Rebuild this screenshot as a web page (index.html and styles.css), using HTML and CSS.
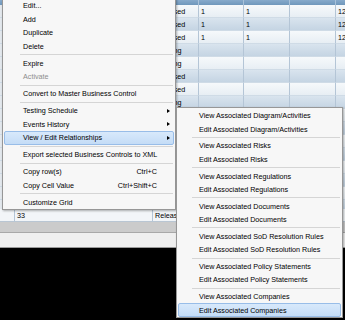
FILE: index.html
```html
<!DOCTYPE html>
<html lang="en">
<head>
  <meta charset="UTF-8" />
  <title>Business Controls</title>
  <link rel="stylesheet" href="styles.css">
</head>
<body>
  <div class="screen">
    <div class="grid">
      <div class="row head">
        <div class="cell c0"></div><div class="cell c1"></div><div class="cell c2"></div>
        <div class="cell c3"></div><div class="cell c4"></div><div class="cell c5"></div><div class="cell c6"></div>
      </div>
      <div class="rows">
        <div class="row"><div class="cell c0"></div><div class="cell c1"></div><div class="cell c2">Released</div><div class="cell c3">1</div><div class="cell c4">1</div><div class="cell c5"></div><div class="cell c6">12</div></div>
        <div class="row"><div class="cell c0"></div><div class="cell c1"></div><div class="cell c2">Released</div><div class="cell c3">1</div><div class="cell c4">1</div><div class="cell c5"></div><div class="cell c6">12</div></div>
        <div class="row"><div class="cell c0"></div><div class="cell c1"></div><div class="cell c2">Released</div><div class="cell c3">1</div><div class="cell c4">1</div><div class="cell c5"></div><div class="cell c6">12</div></div>
        <div class="row"><div class="cell c0"></div><div class="cell c1"></div><div class="cell c2">Pending</div><div class="cell c3"></div><div class="cell c4"></div><div class="cell c5"></div><div class="cell c6"></div></div>
        <div class="row"><div class="cell c0"></div><div class="cell c1"></div><div class="cell c2">Pending</div><div class="cell c3"></div><div class="cell c4"></div><div class="cell c5"></div><div class="cell c6"></div></div>
        <div class="row"><div class="cell c0"></div><div class="cell c1"></div><div class="cell c2">Released</div><div class="cell c3"></div><div class="cell c4"></div><div class="cell c5"></div><div class="cell c6"></div></div>
        <div class="row"><div class="cell c0"></div><div class="cell c1"></div><div class="cell c2">Released</div><div class="cell c3"></div><div class="cell c4"></div><div class="cell c5"></div><div class="cell c6"></div></div>
        <div class="row"><div class="cell c0"></div><div class="cell c1"></div><div class="cell c2">Pending</div><div class="cell c3"></div><div class="cell c4"></div><div class="cell c5"></div><div class="cell c6"></div></div>
        <div class="row"><div class="cell c0"></div><div class="cell c1"></div><div class="cell c2"></div><div class="cell c3"></div><div class="cell c4"></div><div class="cell c5"></div><div class="cell c6"></div></div>
        <div class="row"><div class="cell c0"></div><div class="cell c1"></div><div class="cell c2"></div><div class="cell c3"></div><div class="cell c4"></div><div class="cell c5"></div><div class="cell c6"></div></div>
        <div class="row"><div class="cell c0"></div><div class="cell c1"></div><div class="cell c2"></div><div class="cell c3"></div><div class="cell c4"></div><div class="cell c5"></div><div class="cell c6"></div></div>
        <div class="row"><div class="cell c0"></div><div class="cell c1"></div><div class="cell c2"></div><div class="cell c3"></div><div class="cell c4"></div><div class="cell c5"></div><div class="cell c6"></div></div>
        <div class="row"><div class="cell c0"></div><div class="cell c1"></div><div class="cell c2"></div><div class="cell c3"></div><div class="cell c4"></div><div class="cell c5"></div><div class="cell c6"></div></div>
        <div class="row"><div class="cell c0"></div><div class="cell c1"></div><div class="cell c2"></div><div class="cell c3"></div><div class="cell c4"></div><div class="cell c5"></div><div class="cell c6"></div></div>
        <div class="row"><div class="cell c0"></div><div class="cell c1"></div><div class="cell c2"></div><div class="cell c3"></div><div class="cell c4"></div><div class="cell c5"></div><div class="cell c6"></div></div>
        <div class="row"><div class="cell c0"></div><div class="cell c1"></div><div class="cell c2"></div><div class="cell c3"></div><div class="cell c4"></div><div class="cell c5"></div><div class="cell c6"></div></div>
      </div>
      <div class="row foot">
        <div class="cell c0"></div><div class="cell c1">33</div><div class="cell c2">Releas</div>
        <div class="cell c3"></div><div class="cell c4"></div><div class="cell c5"></div><div class="cell c6"></div>
      </div>
      <div class="hscroll"></div>
      <div class="statusbar"></div>
    </div>

    <div class="menu main">
      <div class="item">Edit...</div>
      <div class="item">Add</div>
      <div class="item">Duplicate</div>
      <div class="item">Delete</div>
      <div class="sep"></div>
      <div class="item">Expire</div>
      <div class="item disabled">Activate</div>
      <div class="sep"></div>
      <div class="item">Convert to Master Business Control</div>
      <div class="sep"></div>
      <div class="item"><span class="label">Testing Schedule</span><span class="arrow"></span></div>
      <div class="item"><span class="label">Events History</span><span class="arrow"></span></div>
      <div class="item active"><span class="label">View / Edit Relationships</span><span class="arrow"></span></div>
      <div class="sep"></div>
      <div class="item">Export selected Business Controls to XML</div>
      <div class="sep"></div>
      <div class="item"><span class="label">Copy row(s)</span><span class="key">Ctrl+C</span></div>
      <div class="item"><span class="label">Copy Cell Value</span><span class="key">Ctrl+Shift+C</span></div>
      <div class="sep"></div>
      <div class="item">Customize Grid</div>
    </div>

    <div class="menu sub">
      <div class="item">View Associated Diagram/Activities</div>
      <div class="item">Edit Associated Diagram/Activities</div>
      <div class="sep"></div>
      <div class="item">View Associated Risks</div>
      <div class="item">Edit Associated Risks</div>
      <div class="sep"></div>
      <div class="item">View Associated Regulations</div>
      <div class="item">Edit Associated Regulations</div>
      <div class="sep"></div>
      <div class="item">View Associated Documents</div>
      <div class="item">Edit Associated Documents</div>
      <div class="sep"></div>
      <div class="item">View Associated SoD Resolution Rules</div>
      <div class="item">Edit Associated SoD Resolution Rules</div>
      <div class="sep"></div>
      <div class="item">View Associated Policy Statements</div>
      <div class="item">Edit Associated Policy Statements</div>
      <div class="sep"></div>
      <div class="item">View Associated Companies</div>
      <div class="item active">Edit Associated Companies</div>
    </div>
  </div>
</body>
</html>
```

FILE: styles.css
```css
body {
  margin: 0;
  background: #000;
  font-family: "Liberation Sans", Arial, sans-serif;
  font-size: 7.2px;
  color: #000;
}

.screen {
  position: relative;
  width: 345px;
  height: 320px;
  overflow: hidden;
}

/* Grid */
.grid {
  height: 248px;
  background: #f0f0f0;
}

.row {
  display: flex;
  height: 13px;
  line-height: 13px;
  white-space: nowrap;
}

.rows {
  height: 204px;
  overflow: hidden;
}

.rows .row:nth-child(odd) {
  background: linear-gradient(#f6f9fb, #e6edf3);
}

.rows .row:nth-child(even) {
  background: linear-gradient(#d9e4ee, #c3d3e2);
}

.cell {
  flex: none;
  overflow: hidden;
  padding-left: 2px;
  box-sizing: border-box;
  border-right: 1px solid #b4c5d6;
  border-bottom: 1px solid #cfdbe6;
}

.c0 { width: 15px; background: #e3e8ed; }
.c1 { width: 138px; }
.c2 { width: 46px; }
.c3 { width: 45px; }
.c4 { width: 46px; }
.c5 { width: 46px; }
.c6 { flex: 1; border-right: none; }

.head {
  height: 5px;
  background: linear-gradient(#87aacb, #6f97bb);
}

.head .cell {
  background: none;
  border-bottom: none;
  border-right-color: #a9c2d9;
}

.foot {
  background: #f2f5f8;
}

.foot .cell {
  background: none;
  border-bottom: 1px solid #b9c6d3;
}

.hscroll {
  height: 10px;
  background: #cbcbcb;
  border-bottom: 1px solid #a8a8a8;
}

.statusbar {
  height: 14px;
  background: #efefef;
  border-bottom: 1px solid #9a9a9a;
}

/* Context menus */
.menu {
  position: absolute;
  background: #f7f7f7;
  border: 1px solid #979797;
  box-shadow: 1px 1px 2px rgba(0, 0, 0, 0.3);
}

.main {
  left: 2px;
  top: -3px;
  width: 172px;
  padding-top: 1px;
}

.sub {
  left: 176px;
  top: 107px;
  width: 165px;
  padding-top: 1px;
}

.item {
  display: flex;
  align-items: center;
  height: 13.5px;
  padding-left: 19px;
  padding-right: 3px;
  white-space: nowrap;
  box-sizing: border-box;
  border: 1px solid transparent;
  margin: 0 1px;
}

.main .item {
  padding-left: 18px;
}

.sub .item {
  height: 13.4px;
  padding-left: 20px;
}

.item.active {
  background: linear-gradient(#d8e9fb, #c4dcf6);
  border-color: #98bde8;
  border-radius: 2px;
}

.item.disabled {
  color: #8d8d8d;
}

.label {
  flex: 1;
}

.key {
  padding-right: 13px;
}

.arrow {
  width: 0;
  height: 0;
  border-left: 3px solid #000;
  border-top: 2.5px solid transparent;
  border-bottom: 2.5px solid transparent;
}

.sep {
  height: 3.5px;
  margin: 0 2px 0 17px;
  background: linear-gradient(#d5d5d5, #d5d5d5) center / 100% 1px no-repeat;
}

.sub .sep {
  height: 3.4px;
  margin-left: 15px;
}
```
